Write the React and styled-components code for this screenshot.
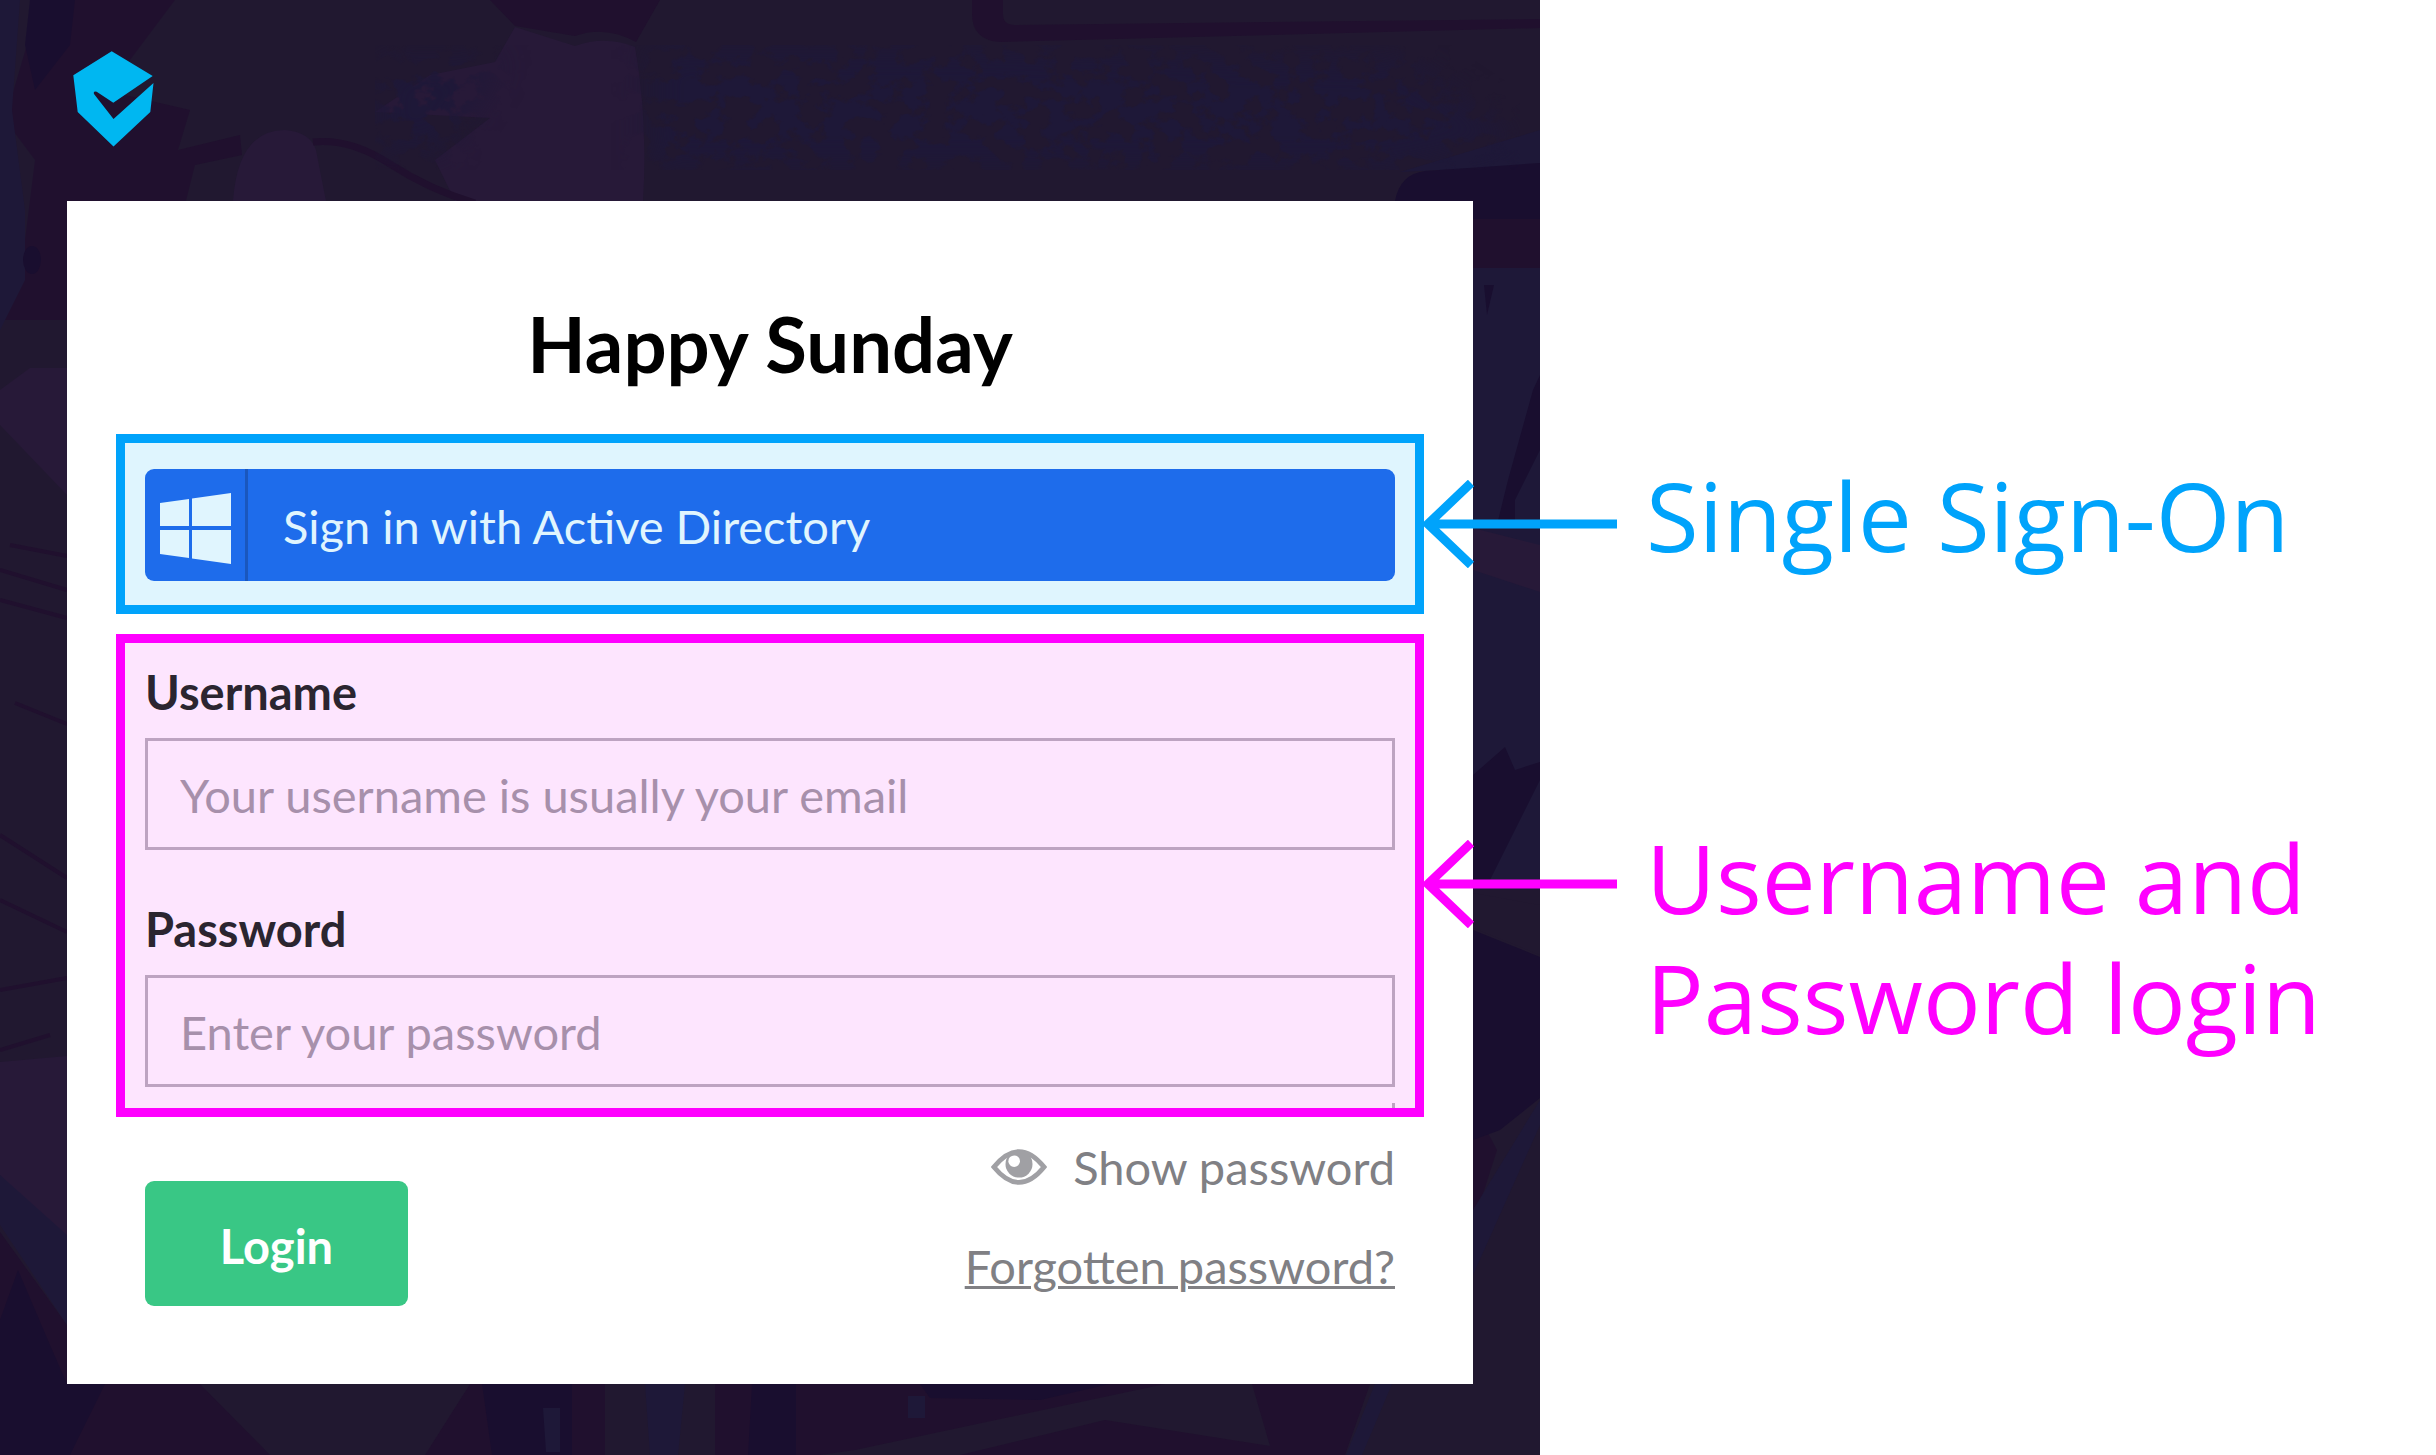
import React from "react";
import styled, { createGlobalStyle, css } from "styled-components";

const SSO = "#00a3fb";
const LOGIN = "#ff00ff";

const GlobalStyle = createGlobalStyle`
  *, *::before, *::after { box-sizing: border-box; }
  body { margin: 0; background: #fff; font-family: Lato, "Open Sans", sans-serif; }
`;

const Page = styled.div`
  display: grid;
  grid-template-columns: minmax(0, 1540fr) minmax(0, 896fr);
  min-height: 100vh;
`;

const Panel = styled.main`
  position: relative;
  z-index: 1;
  padding: 0 67px 71px;
  background: #211830;
`;

const BackdropArt = styled.svg`
  position: absolute;
  inset: 0;
  z-index: -1;
  width: 100%;
  height: 100%;
`;

const Header = styled.header`
  height: 201px;
  padding: 51px 6px 0;
`;

const Logo = styled.svg`
  display: block;
  width: 81px;
  height: 96px;
  fill: #00b7f1;
`;

const Card = styled.form`
  padding: 97px 49px 78px;
  background: #fff;
`;

const Title = styled.h1`
  margin: 0 0 44px;
  font-size: 76px;
  line-height: 92px;
  font-weight: 700;
  text-align: center;
  color: #000;
`;

const Frame = styled.section`
  position: relative;
  border: 9px solid ${(p) => p.$color};
  background: ${(p) => p.$tint};
  padding: ${(p) => p.$pad};
  & + & { margin-top: 20px; }
`;

const Arrow = styled.svg`
  position: absolute;
  left: calc(100% + 8px);
  top: ${(p) => p.$top};
  width: 194px;
  height: 88px;
  fill: none;
  stroke: ${(p) => p.$color};
  stroke-width: 9;
`;

const SsoButton = styled.button`
  display: flex;
  align-items: stretch;
  width: 100%;
  height: 112px;
  padding: 0;
  border: 0;
  border-radius: 9px;
  background: #1e6ceb;
  color: #e0f5fe;
  font: 400 47px/58px Lato, sans-serif;
  text-align: left;
`;

const SsoIcon = styled.span`
  display: grid;
  place-items: center;
  width: 103px;
  padding-top: 6px;
  border-right: 3px solid #1a57bd;
  svg { width: 71px; height: 71px; fill: #e0f5fe; }
`;

const SsoText = styled.span`
  align-self: center;
  padding: 2px 0 0 35px;
`;

const Field = styled.div`
  & + & { margin-top: 50px; }
`;

const Label = styled.label`
  display: block;
  margin-bottom: 17px;
  font-size: 47px;
  line-height: 58px;
  font-weight: 700;
  color: #2b2530;
`;

const Input = styled.input`
  display: block;
  width: 100%;
  height: 112px;
  padding: 2px 32px 0;
  border: 3px solid #bda3c1;
  border-radius: 0;
  background: transparent;
  font: 400 47px/58px Lato, sans-serif;
  color: #2b2530;
  outline: none;
  &::placeholder { color: #a790ab; opacity: 1; }
`;

const Tick = styled.i`
  position: absolute;
  right: 20px;
  bottom: 0;
  width: 3px;
  height: 5px;
  background: #bda3c1;
`;

const Footer = styled.div`
  display: flex;
  justify-content: space-between;
  align-items: flex-end;
  padding: 21px 29px 0;
`;

const LoginButton = styled.button`
  width: 263px;
  height: 125px;
  padding: 4px 0 0;
  border: 0;
  border-radius: 9px;
  background: #39c785;
  color: #fff;
  font: 700 47px/58px Lato, sans-serif;
`;

const Links = styled.div`
  display: flex;
  flex-direction: column;
  align-items: flex-end;
  gap: 41px;
  margin-bottom: 11px;
`;

const linkText = css`
  font: 400 47px/58px Lato, sans-serif;
  color: #808084;
`;

const ShowButton = styled.button`
  display: flex;
  align-items: center;
  gap: 26px;
  padding: 0;
  border: 0;
  background: none;
  ${linkText}
  svg { width: 56px; height: 38px; }
`;

const Forgot = styled.a`
  ${linkText}
  text-decoration: underline;
  text-decoration-thickness: 3px;
`;

const Notes = styled.aside`
  display: flex;
  flex-direction: column;
  gap: 242px;
  padding: 455px 0 0 106px;
`;

const Note = styled.p`
  margin: 0;
  font: 400 96px/120px "Open Sans", sans-serif;
  white-space: nowrap;
  color: ${(p) => p.$color};
`;

function Backdrop() {
  return (
    <BackdropArt viewBox="0 0 1540 1455" preserveAspectRatio="none" aria-hidden="true">
      <defs>
        <filter id="speckle" x="0" y="0" width="100%" height="100%" colorInterpolationFilters="sRGB">
          <feGaussianBlur in="SourceAlpha" stdDeviation="16" result="soft" />
          <feTurbulence type="fractalNoise" baseFrequency="0.04 0.05" numOctaves="4" seed="8" />
          <feColorMatrix values="0 0 0 0 0.118  0 0 0 0 0.094  0 0 0 0 0.22  0 0 0 9 -4" />
          <feComposite in2="soft" operator="in" />
        </filter>
      </defs>
      <g fill="#20102e">
        <path d="M40 0H175L130 60L125 95L190 110L178 150L240 135L242 155L195 165L186 201H67V320H0L25 240L35 160L5 120z" />
        <path d="M490 0H660L636 42Q605 25 575 36L515 26z" />
        <path d="M972 0H1003V14Q1003 25 1015 25L1540 19V28L1000 42Q972 40 972 14z" />
        <path d="M1473 219H1540V268H1473z" />
        <path d="M0 1232L67 1325V1384H200L270 1455H0z" />
        <path d="M470 1384H605V1455H425z" />
        <path d="M715 1384H1165L855 1450L820 1455H715z" />
        <path d="M1252 1384H1370L1345 1455H960L1105 1420L1270 1446z" />
        <path d="M1473 1105L1497 1150L1473 1225z" />
      </g>
      <g fill="#271938">
        <path d="M515 27L575 46Q605 35 635 47Q648 120 643 201H455L435 160L490 118L375 112L430 75L495 62z" />
        <path d="M233 201Q238 130 285 130Q310 132 316 150L326 201z" />
        <path d="M0 390L30 368H67V495L0 425z" />
        <path d="M0 1062L67 1056V1255L0 1175z" />
      </g>
      <g fill="#1e1838">
        <path d="M0 0H20L12 110L25 210V280L0 330z" />
        <path d="M1473 268H1540V890H1473z" />
        <path d="M0 1175L67 1235V1325L0 1225z" />
        <path d="M645 1384H685L678 1455H650z" />
        <path d="M1375 1384H1392L1362 1455H1346z" />
        <path d="M1473 1210L1540 1100V1125L1473 1275z" />
        <path d="M1400 172L1540 130V165z" />
      </g>
      <g fill="#190e2f">
        <path d="M30 0H75L70 45L35 90L25 45z" />
        <ellipse cx="32" cy="260" rx="9" ry="14" />
        <path d="M1395 201Q1400 174 1425 171L1540 163V219H1473V201z" />
        <path d="M1497 525L1508 480L1533 390L1540 375V450L1515 500V525z" />
        <path d="M1484 285H1494L1487 315z" />
        <path d="M1473 775L1505 747L1515 770L1540 762V780L1490 880H1473z" />
        <path d="M1473 930L1540 957V1098L1500 1130L1473 1140z" />
        <path d="M0 1320L18 1270L50 1345L67 1384H105L70 1455H0z" />
        <path d="M482 1384H572V1455H492z" />
        <path d="M752 1384H796V1455H748z" />
        <path d="M920 1384H1110L1040 1400L930 1398z" />
      </g>
      <path d="M1473 528L1540 545V592L1473 570z" fill="#271938" />
      <path d="M543 1408H560V1452H546zM908 1396H925V1418H908z" fill="#1e1838" />
      <path d="M1473 893L1540 905V955L1473 928z" fill="#211830" />
      <g fill="none" stroke="#20102e">
        <path d="M313 142Q350 138 390 164T475 203" strokeWidth="7" />
        <path d="M0 570L67 590M0 600L67 618M15 703L67 724M0 835L67 878M0 900L67 932M0 990L67 978M10 545L67 556M0 1050L50 1035" strokeWidth="4" />
      </g>
      <path d="M380 60H500L440 150H375zM650 45H960L1400 60L1520 140L1390 170H650z" filter="url(#speckle)" />
    </BackdropArt>
  );
}

function ArrowTo({ color, top }) {
  return (
    <Arrow $color={color} $top={top} viewBox="0 0 194 88" aria-hidden="true">
      <path d="M5 44H194M48 3L5 44L48 85" />
    </Arrow>
  );
}

function TextField({ id, label, ...rest }) {
  return (
    <Field>
      <Label htmlFor={id}>{label}</Label>
      <Input id={id} {...rest} />
    </Field>
  );
}

export default function App() {
  return (
    <Page>
      <GlobalStyle />
      <Panel>
        <Backdrop />
        <Header>
          <Logo viewBox="0 0 81 96" role="img" aria-label="Shield">
            <path d="M38.7 .3L79.7 25 40.3 51.7 23.7 40.7Q20 39.500 21 43L40.500 68 80.500 32 77.300 61 40.500 95.500 4.700 61 .3 24.300z" />
          </Logo>
        </Header>
        <Card onSubmit={(e) => e.preventDefault()}>
          <Title>Happy Sunday</Title>
          <Frame $color={SSO} $tint="#dff5fe" $pad="26px 20px 24px">
            <SsoButton type="button">
              <SsoIcon>
                <svg viewBox="0 0 71 71" aria-hidden="true">
                  <path d="M0 10L29 6V33H0zM32 5.500L71 0V33H32zM0 37H29V65L0 61zM32 37H71V71L32 65.500z" />
                </svg>
              </SsoIcon>
              <SsoText>Sign in with Active Directory</SsoText>
            </SsoButton>
            <ArrowTo color={SSO} top="37px" />
          </Frame>
          <Frame $color={LOGIN} $tint="#fde5fe" $pad="20px 20px 21px">
            <TextField id="username" label="Username" type="text" placeholder="Your username is usually your email" />
            <TextField id="password" label="Password" type="password" placeholder="Enter your password" />
            <Tick />
            <ArrowTo color={LOGIN} top="197px" />
          </Frame>
          <Footer>
            <LoginButton type="submit">Login</LoginButton>
            <Links>
              <ShowButton type="button">
                <svg viewBox="0 0 58 38" aria-hidden="true">
                  <path d="M3 19Q29-13 55 19Q29 51 3 19z" fill="#fff" stroke="#a0a0a4" strokeWidth="5" />
                  <circle cx="29" cy="16" r="14" fill="#a0a0a4" />
                  <circle cx="24" cy="13" r="6" fill="#fff" />
                </svg>
                Show password
              </ShowButton>
              <Forgot href="#forgotten">Forgotten password?</Forgot>
            </Links>
          </Footer>
        </Card>
      </Panel>
      <Notes>
        <Note $color={SSO}>Single Sign-On</Note>
        <Note $color={LOGIN}>
          Username and
          <br />
          Password login
        </Note>
      </Notes>
    </Page>
  );
}
